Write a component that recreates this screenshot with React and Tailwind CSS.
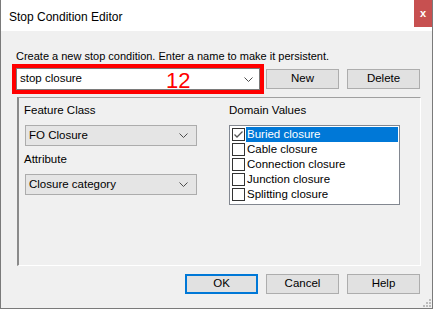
import React from 'react';

const font = { fontFamily: '"Liberation Sans", Arial, sans-serif' };

function Chevron() {
  return (
    <svg width="9" height="5" viewBox="0 0 9 5" className="shrink-0">
      <path d="M0.5 0.5 L4.5 4.5 L8.5 0.5" fill="none" stroke="#4d4d4d" strokeWidth="1" />
    </svg>
  );
}

function Combo({ value, className = '' }) {
  return (
    <div className={`flex items-center justify-between h-[21px] w-[172px] border border-[#acacac] bg-[#e5e5e5] pl-[3px] pr-[8px] text-[11.5px] text-black ${className}`}>
      <span>{value}</span>
      <Chevron />
    </div>
  );
}

function Button({ label, primary }) {
  return (
    <div
      className={`flex items-center justify-center w-[73px] h-[20px] bg-[#e1e1e1] text-[11.5px] text-black ${
        primary ? 'border-2 border-[#0078d7]' : 'border border-[#adadad]'
      }`}
    >
      {label}
    </div>
  );
}

const values = ['Buried closure', 'Cable closure', 'Connection closure', 'Junction closure', 'Splitting closure'];

export default function App() {
  return (
    <div className="w-[434px] h-[309px] bg-white" style={font}>
      <div className="w-[433px] h-[309px] flex flex-col border-x border-b border-[#7a7a7a] bg-[#f0f0f0]">
        {/* title bar */}
        <div className="h-[31px] bg-white flex shrink-0">
          <span className="pl-[8px] pt-[8px] text-[12px] text-black">Stop Condition Editor</span>
          <div className="ml-auto w-[18px] h-[27px] bg-[#c75050] flex items-center justify-center text-white text-[11px] font-bold leading-none">
            x
          </div>
        </div>

        <div className="flex-1 flex flex-col relative">
          <p className="pt-[18px] pl-[15px] text-[11px] leading-[15px] text-black">
            Create a new stop condition. Enter a name to make it persistent.
          </p>

          <div className="flex items-start pl-[11px]">
            <div className="relative w-[252px] h-[30px] border-[4px] border-[#ff0000]">
              <div className="flex items-center justify-between h-full bg-white border border-[#7a7a7a] pl-[3px] pr-[6px] text-[11.5px] text-black">
                <span>stop closure</span>
                <Chevron />
              </div>
              <span className="absolute left-[150px] top-[2px] text-[22px] leading-[22px] text-[#ff0000]">12</span>
            </div>
            <div className="ml-[2px] mt-[5px]">
              <Button label="New" />
            </div>
            <div className="ml-[8px] mt-[5px]">
              <Button label="Delete" />
            </div>
          </div>

          {/* group panel */}
          <div className="ml-[16px] mt-[3px] w-[404px] h-[169px] border-t border-l-2 border-t-[#a0a0a0] border-l-[#8a8a8a] border-r border-b border-r-white border-b-white flex">
            <div className="w-[210px] pl-[5px] pt-[5px] flex flex-col">
              <span className="text-[11.5px] leading-[15px] text-black">Feature Class</span>
              <Combo value="FO Closure" className="mt-[7px] ml-[1px]" />
              <span className="mt-[6px] text-[11.5px] leading-[15px] text-black">Attribute</span>
              <Combo value="Closure category" className="mt-[7px] ml-[1px]" />
            </div>
            <div className="pt-[5px] flex flex-col">
              <span className="text-[11.5px] leading-[15px] text-black">Domain Values</span>
              <div className="mt-[7px] w-[171px] h-[80px] border border-[#828790] bg-white pt-[1px] pl-[2px] pr-[1px]">
                {values.map((v, i) => (
                  <div key={v} className="flex items-center h-[15px]">
                    <div className="w-[13px] h-[13px] border border-[#333] bg-white flex items-center justify-center shrink-0">
                      {i === 0 && (
                        <svg width="11" height="11" viewBox="0 0 11 11">
                          <path d="M1.5 5.5 L4 8 L9.5 2.5" fill="none" stroke="#555" strokeWidth="1.3" />
                        </svg>
                      )}
                    </div>
                    <span
                      className={`ml-[1px] h-[15px] flex items-center pl-[1px] text-[11.5px] ${
                        i === 0 ? 'flex-1 bg-[#0078d7] text-white' : 'text-black'
                      }`}
                    >
                      {v}
                    </span>
                  </div>
                ))}
              </div>
            </div>
          </div>

          {/* bottom buttons */}
          <div className="flex justify-end gap-[8px] pr-[12px] mt-[8px]">
            <Button label="OK" primary />
            <Button label="Cancel" />
            <Button label="Help" />
          </div>

          {/* resize grip */}
          <svg width="8" height="8" viewBox="0 0 8 8" className="absolute right-[1px] bottom-[1px]">
            <rect x="6" y="0" width="2" height="2" fill="#bcbcbc" />
            <rect x="3" y="3" width="2" height="2" fill="#bcbcbc" />
            <rect x="6" y="3" width="2" height="2" fill="#bcbcbc" />
            <rect x="0" y="6" width="2" height="2" fill="#bcbcbc" />
            <rect x="3" y="6" width="2" height="2" fill="#bcbcbc" />
            <rect x="6" y="6" width="2" height="2" fill="#bcbcbc" />
          </svg>
        </div>
      </div>
    </div>
  );
}
